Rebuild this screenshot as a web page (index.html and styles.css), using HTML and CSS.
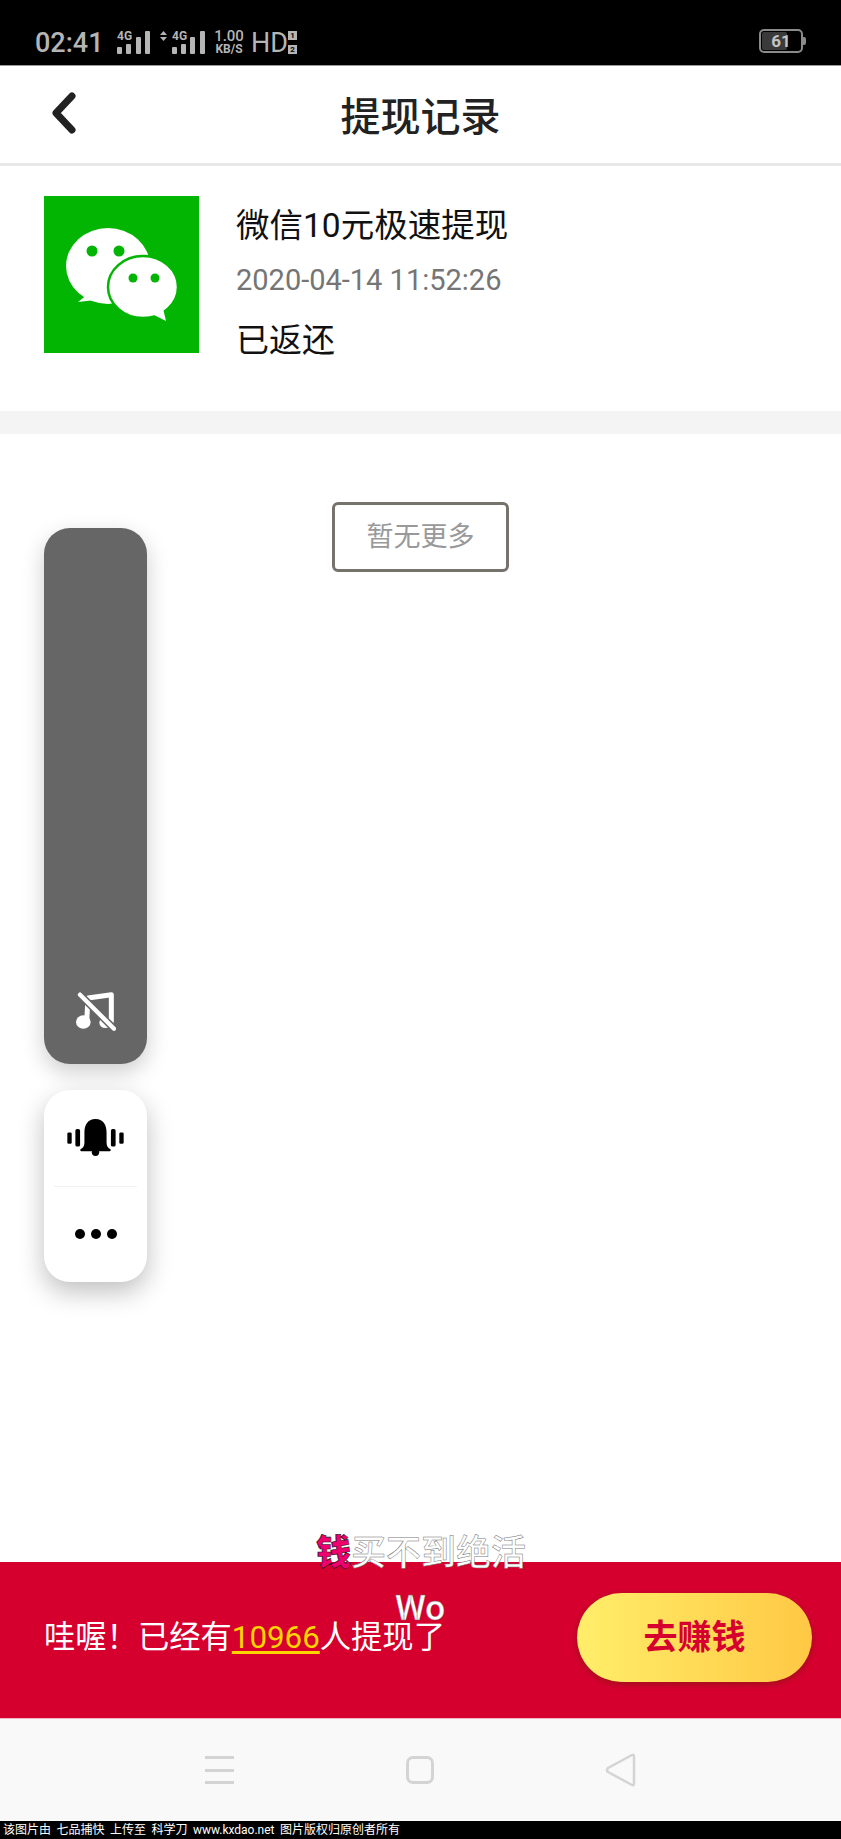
FILE: index.html
```html
<!DOCTYPE html>
<html lang="zh-Hans">
<head>
  <meta charset="UTF-8">
  <title>提现记录</title>
  <link rel="stylesheet" href="styles.css">
</head>
<body>

<div class="page">
  <!-- 状态栏 -->
  <div class="status-bar">
    <span class="time">02:41</span>
    <svg class="signal signal-first" width="33" height="24" viewBox="0 0 33 24">
      <text class="signal-text" x="0" y="10">4G</text>
      <rect x="0" y="17" width="5" height="7" rx="1"/>
      <rect x="9" y="14" width="5" height="10" rx="1"/>
      <rect x="19" y="7" width="5" height="17" rx="1"/>
      <rect x="28" y="1" width="5" height="23" rx="1"/>
    </svg>
    <svg class="arrows" width="7" height="10" viewBox="0 0 7 10">
      <path d="M3.5 0 L7 4 H0 Z M0 6 H7 L3.5 10 Z"/>
    </svg>
    <svg class="signal" width="33" height="24" viewBox="0 0 33 24">
      <text class="signal-text" x="0" y="10">4G</text>
      <rect x="0" y="17" width="5" height="7" rx="1"/>
      <rect x="9" y="14" width="5" height="10" rx="1"/>
      <rect x="18" y="7" width="5" height="17" rx="1"/>
      <rect x="28" y="1" width="5" height="23" rx="1"/>
    </svg>
    <div class="speed">
      <span class="speed-num">1.00</span>
      <span class="speed-unit">KB/S</span>
    </div>
    <span class="hd">HD</span>
    <div class="sim">
      <span>1</span>
      <span>2</span>
    </div>
    <div class="battery">
      <div class="battery-fill"></div>
      <span class="battery-num">61</span>
    </div>
  </div>

  <!-- 顶部标题 -->
  <div class="nav">
    <svg class="back" width="26" height="42" viewBox="0 0 26 42">
      <path d="M21 4 L5 21 L21 38" fill="none" stroke="#222" stroke-width="7" stroke-linecap="round" stroke-linejoin="round"/>
    </svg>
    <h1 class="nav-title">提现记录</h1>
  </div>

  <!-- 提现记录 -->
  <div class="record">
    <svg class="wechat" width="155" height="157" viewBox="0 0 155 157">
      <rect width="155" height="157" fill="#03b503"/>
      <ellipse cx="64" cy="70" rx="42" ry="38" fill="#fff"/>
      <path d="M44 98 L34 106 L60 103 Z" fill="#fff"/>
      <circle cx="48" cy="55" r="5.5" fill="#03b503"/>
      <circle cx="75" cy="55" r="5.5" fill="#03b503"/>
      <ellipse cx="99" cy="91" rx="35" ry="31" fill="#fff" stroke="#03b503" stroke-width="2.5"/>
      <path d="M108 118 L122 125 L118 108 Z" fill="#fff"/>
      <circle cx="89" cy="82" r="4.5" fill="#03b503"/>
      <circle cx="111" cy="82" r="4.5" fill="#03b503"/>
    </svg>
    <div class="record-info">
      <div class="record-title">微信10元极速提现</div>
      <div class="record-date">2020-04-14 11:52:26</div>
      <div class="record-state">已返还</div>
    </div>
  </div>

  <div class="divider"></div>

  <div class="content">
    <div class="no-more">暂无更多</div>

    <!-- 悬浮工具条 -->
    <div class="float-tools">
      <div class="tool-music">
        <svg width="40" height="40" viewBox="0 0 120 120">
          <path d="M32 90 L36 18 L106 8 V92" fill="none" stroke="#fff" stroke-width="15" stroke-linejoin="round"/>
          <ellipse cx="22" cy="90" rx="22" ry="20" fill="#fff"/>
          <ellipse cx="88" cy="92" rx="18" ry="16" fill="#fff"/>
          <path d="M12 8 L114 110" stroke="#666" stroke-width="22"/>
          <path d="M12 8 L114 110" stroke="#fff" stroke-width="13" stroke-linecap="round"/>
        </svg>
      </div>
      <div class="tool-menu">
        <div class="tool-item tool-bell">
          <svg width="57" height="37" viewBox="0 0 170 110">
            <path d="M85 0 C60 0 52 20 52 40 V70 Q52 85 40 90 Q38 96 45 96 H125 Q132 96 130 90 Q118 85 118 70 V40 C118 20 110 0 85 0 Z"/>
            <circle cx="85" cy="99" r="11"/>
            <rect x="25" y="30" width="14" height="52" rx="5"/>
            <rect x="131" y="30" width="14" height="52" rx="5"/>
            <rect x="1" y="40" width="13" height="34" rx="4"/>
            <rect x="156" y="40" width="13" height="34" rx="4"/>
          </svg>
        </div>
        <div class="tool-item">
          <div class="dots"><i></i><i></i><i></i></div>
        </div>
      </div>
    </div>
  </div>

  <!-- 底部提示 -->
  <div class="earn-bar">
    <div class="earn-text">哇喔！已经有<span class="earn-count">10966</span>人提现了</div>
    <div class="earn-btn">去赚钱</div>
    <div class="danmu danmu-top"><b>钱</b>买不到绝活</div>
    <div class="danmu danmu-wo">Wo</div>
  </div>

  <!-- 系统导航 -->
  <div class="sys-nav">
    <div class="sys-menu"><i></i><i></i><i></i></div>
    <div class="sys-home"></div>
    <svg class="sys-back" width="30" height="34" viewBox="0 0 30 34">
      <path d="M26 2 Q28 1 28 4 V30 Q28 33 26 32 L2 19 Q0 17 2 15 Z" fill="none" stroke="#d4d4d4" stroke-width="2.5" stroke-linejoin="round"/>
    </svg>
  </div>

  <div class="watermark">该图片由 七品捕快 上传至 科学刀 www.kxdao.net 图片版权归原创者所有</div>
</div>

</body>
</html>
```

FILE: styles.css
```css
* {
  box-sizing: border-box;
}

body {
  margin: 0;
  background-color: #fff;
  font-family: Roboto, "Noto Sans CJK SC", sans-serif;
}

.page {
  display: flex;
  flex-direction: column;
  height: 1839px;
  position: relative;
  overflow: hidden;
}

/* 状态栏 */
.status-bar {
  height: 66px;
  flex-shrink: 0;
  background-color: #000;
  border-bottom: 1px solid #999;
  display: flex;
  align-items: flex-start;
  padding-left: 35px;
  padding-top: 29px;
  color: #b5b5b5;
}

.time {
  font-size: 27px;
  line-height: 28px;
  font-weight: 500;
  width: 82px;
}

.signal {
  fill: #b5b5b5;
  margin-top: 1px;
  overflow: visible;
}

.signal-first {
  margin-right: 10px;
}

.signal-text {
  font-family: Roboto, sans-serif;
  font-size: 12px;
  font-weight: 700;
}

.arrows {
  fill: #b5b5b5;
  margin-top: 2px;
  margin-right: 5px;
}

.speed {
  display: flex;
  flex-direction: column;
  align-items: center;
  width: 32px;
  margin-left: 8px;
  margin-top: 1px;
}

.speed-num {
  font-size: 15px;
  line-height: 13px;
  font-weight: 500;
}

.speed-unit {
  font-size: 12px;
  line-height: 12px;
  font-weight: 700;
}

.hd {
  font-size: 27px;
  line-height: 28px;
  margin-left: 6px;
  width: 37px;
}

.sim {
  display: flex;
  flex-direction: column;
  gap: 5px;
  margin-top: 2px;
}

.sim span {
  width: 9px;
  height: 9px;
  background-color: #b5b5b5;
  color: #000;
  font-size: 8px;
  line-height: 9px;
  font-weight: 700;
  text-align: center;
}

.battery {
  width: 44px;
  height: 24px;
  margin-left: auto;
  margin-right: 38px;
  border: 2px solid #8a8a8a;
  border-radius: 5px;
  position: relative;
  display: flex;
  align-items: center;
  justify-content: center;
}

.battery::after {
  content: '';
  position: absolute;
  right: -5px;
  top: 6px;
  width: 3px;
  height: 8px;
  background-color: #8a8a8a;
  border-radius: 0 2px 2px 0;
}

.battery-fill {
  position: absolute;
  left: 1px;
  top: 1px;
  bottom: 1px;
  width: 25px;
  background-color: #3a3a3a;
  border-radius: 2px;
}

.battery-num {
  position: relative;
  font-size: 17px;
  font-weight: 700;
  color: #c4c4c4;
}

/* 顶部标题 */
.nav {
  height: 100px;
  flex-shrink: 0;
  border-bottom: 3px solid #e8e8e8;
  display: flex;
  align-items: center;
  justify-content: center;
  padding-top: 6px;
  position: relative;
}

.back {
  position: absolute;
  left: 51px;
  top: 26px;
}

.nav-title {
  margin: 0;
  font-size: 40px;
  line-height: 50px;
  font-weight: 500;
  color: #222;
}

/* 记录 */
.record {
  height: 245px;
  flex-shrink: 0;
  display: flex;
  align-items: flex-start;
  padding: 30px 0 0 44px;
}

.record-info {
  margin-left: 37px;
  padding-top: 1px;
}

.record-title {
  font-size: 33.5px;
  line-height: 58px;
  color: #111;
}

.record-date {
  font-size: 29px;
  line-height: 50px;
  color: #757575;
}

.record-state {
  font-size: 33px;
  line-height: 48px;
  margin-top: 12px;
  color: #111;
}

.divider {
  height: 23px;
  flex-shrink: 0;
  background-color: #f4f4f4;
}

.content {
  flex: 1;
  display: flex;
  flex-direction: column;
  align-items: center;
  padding-top: 68px;
  position: relative;
}

.no-more {
  width: 177px;
  height: 70px;
  border: 3px solid #76736d;
  border-radius: 6px;
  font-size: 27px;
  line-height: 65px;
  text-align: center;
  color: #999;
}

/* 悬浮工具条 */
.float-tools {
  position: absolute;
  left: 44px;
  top: 94px;
  width: 103px;
  display: flex;
  flex-direction: column;
  gap: 26px;
}

.tool-music {
  height: 536px;
  background-color: #666;
  border-radius: 26px;
  box-shadow: 0 8px 22px rgba(0, 0, 0, 0.2);
  display: flex;
  align-items: flex-end;
  justify-content: center;
  padding-bottom: 32px;
}

.tool-menu {
  height: 192px;
  background-color: #fff;
  border-radius: 26px;
  box-shadow: 0 10px 26px rgba(0, 0, 0, 0.25);
  display: flex;
  flex-direction: column;
}

.tool-item {
  flex: 1;
  display: flex;
  align-items: center;
  justify-content: center;
}

.tool-bell {
  margin: 0 10px;
  border-bottom: 1px solid #f1f1f1;
}

.dots {
  display: flex;
  gap: 6px;
}

.dots i {
  width: 10px;
  height: 10px;
  border-radius: 50%;
  background-color: #000;
}

/* 底部提示 */
.earn-bar {
  height: 156px;
  flex-shrink: 0;
  background-color: #d6002f;
  display: flex;
  align-items: center;
  justify-content: space-between;
  padding: 0 29px 5px 44px;
  position: relative;
}

.earn-text {
  font-size: 31.3px;
  line-height: 36px;
  color: #fff;
}

.earn-count {
  color: #ffd500;
  text-decoration: underline;
  text-underline-offset: 3px;
}

.earn-btn {
  width: 235px;
  height: 89px;
  border-radius: 45px;
  background: linear-gradient(90deg, #ffee6a 0%, #ffc844 100%);
  box-shadow: 0 2px 6px rgba(90, 40, 0, 0.5);
  font-size: 34px;
  font-weight: 700;
  line-height: 89px;
  text-align: center;
  color: #d6002f;
}

.danmu {
  position: absolute;
  color: #fff;
  white-space: nowrap;
}

.danmu-top {
  left: 316px;
  top: -33px;
  font-size: 35px;
  line-height: 50px;
  font-weight: 500;
  -webkit-text-stroke: 0.5px #777;
}

.danmu-top b {
  color: #f0006e;
  font-weight: 900;
  -webkit-text-stroke: 0.6px #111;
}

.danmu-wo {
  left: 395px;
  top: 32px;
  font-size: 35px;
  line-height: 30px;
  font-weight: 500;
  -webkit-text-stroke: 0.3px #666;
}

/* 系统导航 */
.sys-nav {
  height: 103px;
  flex-shrink: 0;
  background-color: #f9f9f9;
  border-top: 1px solid #f3b5c4;
  display: flex;
  align-items: center;
  justify-content: center;
  gap: 172px;
}

.sys-menu {
  width: 29px;
  display: flex;
  flex-direction: column;
  gap: 9.5px;
}

.sys-menu i {
  height: 3px;
  background-color: #d4d4d4;
}

.sys-home {
  width: 28px;
  height: 28px;
  border: 3px solid #d4d4d4;
  border-radius: 7px;
}

.sys-back {
  overflow: visible;
}

.watermark {
  height: 18px;
  flex-shrink: 0;
  background-color: #000;
  color: #fff;
  font-size: 12px;
  line-height: 18px;
  padding-left: 3px;
  white-space: nowrap;
  word-spacing: 2.5px;
}
```
